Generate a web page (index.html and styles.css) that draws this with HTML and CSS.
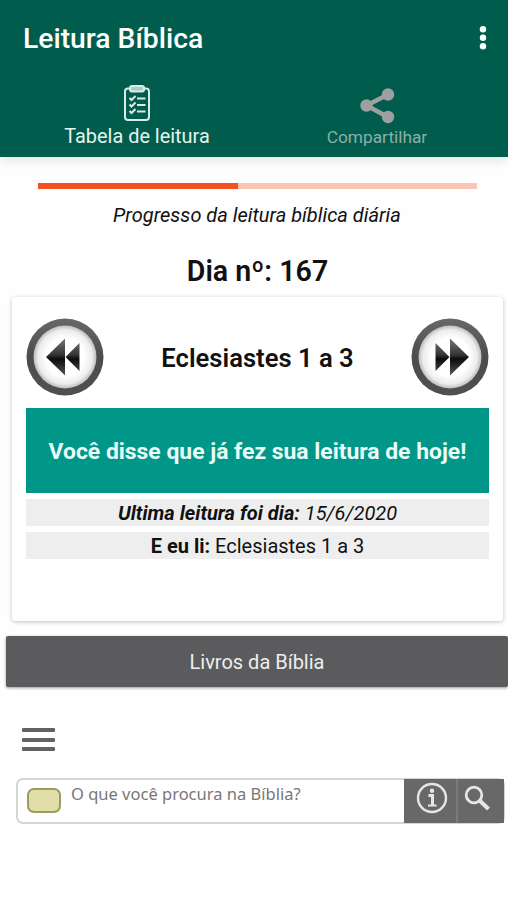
FILE: index.html
```html
<!DOCTYPE html>
<html lang="pt-BR">
<head>
  <meta charset="UTF-8" />
  <meta name="viewport" content="width=device-width, initial-scale=1.0"/>
  <title>Leitura Bíblica</title>
  <link rel="stylesheet" href="styles.css">
</head>
<body>
  <header>
    <div class="top-bar">
      <h1>Leitura Bíblica</h1>
      <button class="more" aria-label="Mais opções">
        <svg width="8" height="26" viewBox="0 0 8 26" fill="#fff">
          <circle cx="4" cy="4.3" r="3.2"/>
          <circle cx="4" cy="12.8" r="3.2"/>
          <circle cx="4" cy="21.3" r="3.2"/>
        </svg>
      </button>
    </div>
    <nav class="tabs">
      <a class="tab active">
        <svg width="28" height="38" viewBox="0 0 28 38" fill="none" stroke="#d9ece5" stroke-width="2">
          <rect x="2" y="3.5" width="24" height="31.5" rx="3"/>
          <rect x="7" y="1" width="14" height="5.5" rx="2" fill="#a9cdc3"/>
          <path d="M14 13.5h8.5M14 20h8.5M14 26.5h8.5"/>
          <path d="M6.5 13l2 2 4-4M6.5 19.5l2 2 4-4M6.5 26l2 2 4-4"/>
        </svg>
        <span>Tabela de leitura</span>
      </a>
      <a class="tab">
        <svg width="36" height="38" viewBox="0 0 36 38" fill="#9d9fa0">
          <path d="M29 7.5L7.5 18.5L29 30" fill="none" stroke="#9d9fa0" stroke-width="4.5"/>
          <circle cx="29" cy="7.5" r="6.2"/>
          <circle cx="7.5" cy="18.5" r="6.2"/>
          <circle cx="29" cy="30" r="6.2"/>
        </svg>
        <span>Compartilhar</span>
      </a>
    </nav>
  </header>

  <main>
    <div class="progress"><div class="progress-bar"></div></div>
    <p class="progress-label">Progresso da leitura bíblica diária</p>
    <h2>Dia nº: 167</h2>

    <section class="card">
      <div class="reading">
        <button class="round" aria-label="Anterior">
          <svg width="78" height="78" viewBox="0 0 78 78">
            <defs>
              <linearGradient id="arrow" x1="0" y1="0" x2="0" y2="1">
                <stop offset="0" stop-color="#777"/>
                <stop offset=".45" stop-color="#333"/>
                <stop offset=".55" stop-color="#0c0c0c"/>
                <stop offset="1" stop-color="#555"/>
              </linearGradient>
              <linearGradient id="ring" x1="0" y1="0" x2="0" y2="1">
                <stop offset="0" stop-color="#686868"/>
                <stop offset=".5" stop-color="#4c4c4c"/>
                <stop offset="1" stop-color="#505050"/>
              </linearGradient>
              <radialGradient id="face">
                <stop offset=".6" stop-color="#fff"/>
                <stop offset=".86" stop-color="#ececec"/>
                <stop offset="1" stop-color="#bbb"/>
              </radialGradient>
            </defs>
            <circle cx="39" cy="39" r="38.5" fill="url(#ring)"/>
            <circle cx="39" cy="39" r="31.5" fill="url(#face)"/>
            <path d="M20 39L39 20.5V57.5zM39.5 39L53.5 25V53z" fill="url(#arrow)"/>
          </svg>
        </button>
        <h3>Eclesiastes 1 a 3</h3>
        <button class="round" aria-label="Próximo">
          <svg width="78" height="78" viewBox="0 0 78 78">
            <circle cx="39" cy="39" r="38.5" fill="url(#ring)"/>
            <circle cx="39" cy="39" r="31.5" fill="url(#face)"/>
            <path d="M58 39L39 20.5V57.5zM38.5 39L24.5 25V53z" fill="url(#arrow)"/>
          </svg>
        </button>
      </div>
      <div class="done">Você disse que já fez sua leitura de hoje!</div>
      <p class="info"><em><b>Ultima leitura foi dia:</b> 15/6/2020</em></p>
      <p class="info"><b>E eu li:</b> Eclesiastes 1 a 3</p>
    </section>

    <button class="books">Livros da Bíblia</button>

    <button class="menu" aria-label="Menu">
      <span></span><span></span><span></span>
    </button>

    <form class="search">
      <i class="swatch"></i>
      <label>O que você procura na Bíblia?</label>
      <button type="button" class="tool" aria-label="Informações">
        <svg width="32" height="32" viewBox="0 0 32 32" fill="none" stroke="#e6e6e6">
          <circle cx="16" cy="16" r="14" stroke-width="2.4"/>
          <circle cx="16" cy="8.8" r="2.2" fill="#e6e6e6" stroke="none"/>
          <path d="M12.5 13.5h4v10" stroke-width="3"/>
          <path d="M12 23.5h8.5" stroke-width="2"/>
        </svg>
      </button>
      <button type="button" class="tool" aria-label="Buscar">
        <svg width="26" height="26" viewBox="0 0 26 26" fill="none" stroke="#e6e6e6">
          <circle cx="10" cy="10" r="7.8" stroke-width="2.8"/>
          <path d="M15.5 15.5L24.5 24" stroke-width="4"/>
        </svg>
      </button>
    </form>
  </main>
</body>
</html>
```

FILE: styles.css
```css
* {
  box-sizing: border-box;
}

body {
  font-family: Roboto, sans-serif;
  background: #fefefe;
  color: #111;
  margin: 0;
  overflow-x: hidden;
}

h1, h2, h3, p {
  margin: 0;
}

button {
  font-family: inherit;
  border: none;
  padding: 0;
  background: none;
}

svg {
  display: block;
}

header {
  height: 157px;
  background: #005d4d;
  box-shadow: 0 2px 12px rgba(0, 0, 0, 0.14);
}

.top-bar {
  display: flex;
  justify-content: space-between;
  align-items: center;
  height: 77px;
  padding: 0 21px 0 23px;
}

.more {
  margin-top: -2px;
}

h1 {
  color: #fff;
  font-size: 28.3px;
  font-weight: 500;
  line-height: 32px;
}

.tabs {
  display: flex;
  padding: 6px 0 0 17px;
}

.tab {
  width: 240px;
  display: flex;
  flex-direction: column;
  align-items: center;
  color: #8cafa7;
  font-size: 17.3px;
  line-height: 24px;
  padding-top: 4px;
}

.tab.active {
  color: #e3f3ee;
  font-size: 19.9px;
  padding-top: 2px;
}

.tab.active span {
  margin-top: 2px;
}

main {
  padding-top: 26px;
}

.progress {
  height: 6px;
  margin: 0 31px 0 38px;
  background: #fac6b5;
}

.progress-bar {
  width: 200px;
  height: 100%;
  background: #f4511e;
}

.progress-label {
  margin-top: 14px;
  text-align: center;
  font-size: 20px;
  line-height: 24px;
  font-style: italic;
  padding-left: 6px;
}

h2 {
  margin-top: 28px;
  text-align: center;
  font-size: 28.6px;
  line-height: 32px;
  font-weight: 600;
  padding-left: 7px;
}

.card {
  height: 324px;
  margin: 10px 5px 0 12px;
  padding: 21px 14px 0;
  background: #fff;
  border-radius: 4px;
  box-shadow: 0 1px 4px rgba(0, 0, 0, 0.25);
}

.reading {
  display: flex;
  justify-content: space-between;
  align-items: center;
}

h3 {
  padding-top: 1px;
  font-size: 25.6px;
  font-weight: 600;
}

.done {
  display: flex;
  align-items: center;
  justify-content: center;
  height: 85px;
  margin-top: 12px;
  padding-top: 2px;
  background: #009688;
  color: #e9fcf7;
  font-size: 22.9px;
  font-weight: 700;
  white-space: nowrap;
}

.info {
  height: 27px;
  margin-top: 6px;
  background: #eee;
  text-align: center;
  font-size: 20px;
  line-height: 28px;
}

.books {
  display: block;
  width: 502px;
  height: 51px;
  margin: 15px 0 0 6px;
  border-radius: 2px;
  background: #5b5b5d;
  color: #eee;
  font-size: 20px;
  box-shadow: 0 1px 3px rgba(0, 0, 0, 0.4);
}

.menu {
  display: flex;
  flex-direction: column;
  gap: 5.5px;
  margin: 41px 0 0 22px;
}

.menu span {
  width: 33px;
  height: 4px;
  border-radius: 1px;
  background: #626262;
}

.search {
  display: flex;
  height: 46px;
  margin: 27px 3px 0 16px;
  padding-left: 9px;
  border: 2px solid #d5d5d5;
  border-radius: 7px;
  background: #fff;
}

.swatch {
  width: 34px;
  height: 25px;
  margin-top: 8px;
  border: 2px solid #9c9c62;
  border-radius: 7px;
  background: #e2deaa;
}

.search label {
  flex: 1;
  margin-left: 10px;
  color: #777;
  font-family: "Noto Sans", sans-serif;
  font-size: 16.5px;
  line-height: 28px;
}

.tool {
  display: flex;
  justify-content: center;
  width: 52px;
  height: 44px;
  margin-top: -1px;
  padding: 3px 0 0 4px;
  background: #686868;
}

.tool + .tool {
  width: 48px;
  padding: 6px 8px 0 0;
  margin-right: -1px;
  border-left: 2px solid #7b7b7b;
}
```
